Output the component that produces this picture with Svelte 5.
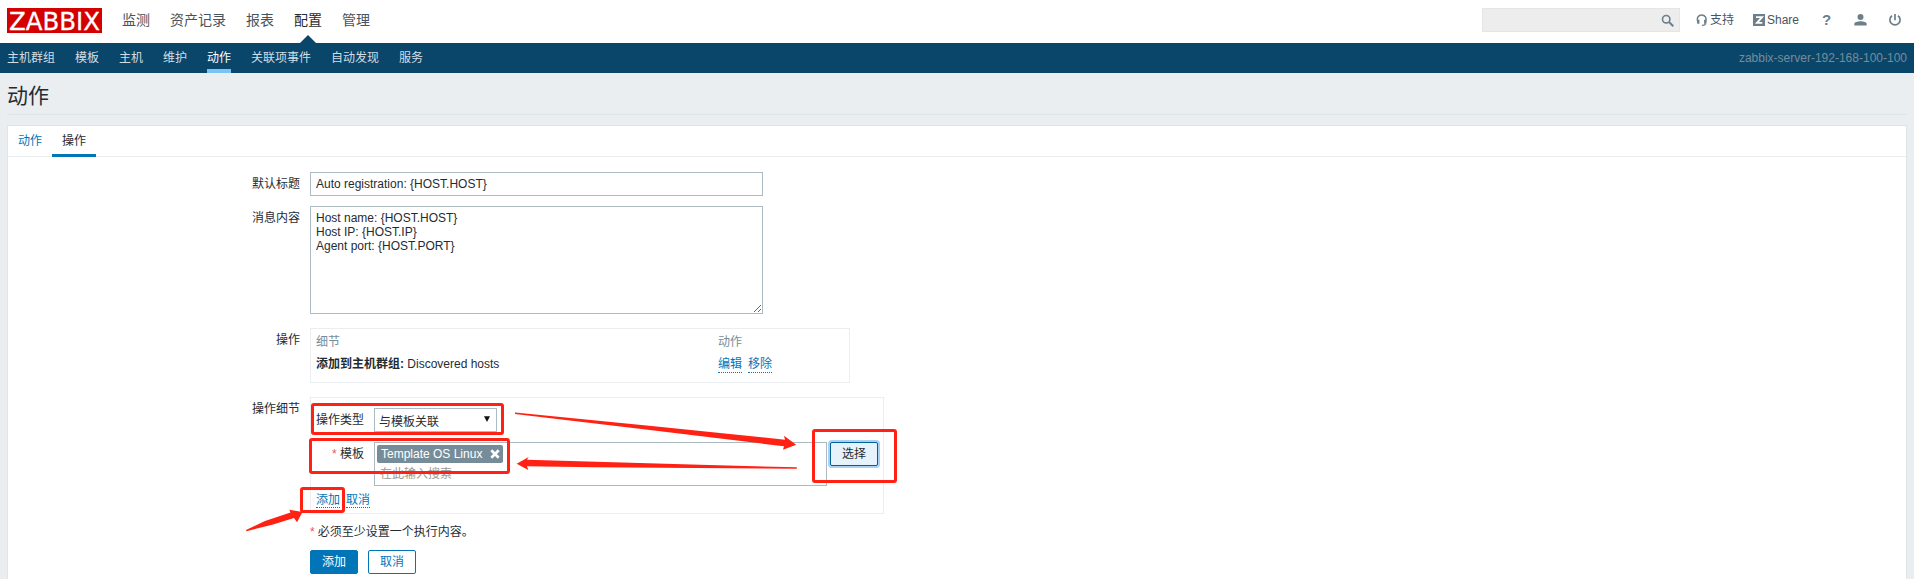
<script>
  const mainMenu = ['监测', '资产记录', '报表', '配置', '管理'];
  const subMenu = ['主机群组', '模板', '主机', '维护', '动作', '关联项事件', '自动发现', '服务'];
  const message = 'Host name: {HOST.HOST}\nHost IP: {HOST.IP}\nAgent port: {HOST.PORT}';
</script>

<div class="page">
  <header>
    <svg class="logo" width="95" height="25" viewBox="0 0 95 25">
      <rect width="95" height="25" fill="#d40000" />
      <text x="2" y="21.5" textLength="91" lengthAdjust="spacingAndGlyphs">ZABBIX</text>
    </svg>
    <nav class="main">
      {#each mainMenu as item}
        <a class:active={item === '配置'}>{item}</a>
      {/each}
    </nav>
    <div class="search">
      <svg width="14" height="14" viewBox="0 0 14 14" fill="none" stroke="#6c7f8a">
        <circle cx="5.2" cy="5.2" r="3.7" stroke-width="1.6" />
        <path d="M8 8l4.3 4.3" stroke-width="2" />
      </svg>
    </div>
    <div class="tools">
      <a class="support">
        <svg width="12" height="13" viewBox="0 0 12 13" fill="none" stroke="#6c7f8a">
          <path d="M2 8.5C.2 3.800 2.600 1 5.700 1s5.500 2.800 3.700 7.500" stroke-width="1.5" />
          <path d="M2.300 5.800v4M9.200 5.800v4" stroke-width="2.200" />
          <path d="M9.700 9.500c-.3 1.600-1.500 2-3.700 2" stroke-width="1.300" />
        </svg>支持</a>
      <a class="share">
        <svg width="12" height="12" viewBox="0 0 12 12">
          <rect width="12" height="12" fill="#6c7f8a" />
          <path d="M3 3.100h6L4 8.900h5.300" fill="none" stroke="#fff" stroke-width="1.900" />
        </svg>Share</a>
      <a class="help">?</a>
      <svg class="user" width="13" height="12" viewBox="0 0 13 12" fill="#6c7f8a">
        <circle cx="6.500" cy="3" r="3" />
        <path d="M.3 11.500V10C.3 8.200 3.500 7.300 6.500 7.300s6.200.9 6.200 2.700v1.500z" />
      </svg>
      <svg class="power" width="14" height="14" viewBox="0 0 14 14" fill="none" stroke="#6c7f8a" stroke-width="1.700">
        <path d="M7 1v6.300M4 2.700a5.100 5.100 0 1 0 6 0" />
      </svg>
    </div>
  </header>

  <nav class="sub">
    {#each subMenu as item}
      <a class:active={item === '动作'}>{item}</a>
    {/each}
    <span class="server">zabbix-server-192-168-100-100</span>
  </nav>

  <h1>动作</h1>

  <main>
    <div class="tabs">
      <a>动作</a>
      <a class="active">操作</a>
    </div>

    <div class="row subject">
      <span class="label">默认标题</span>
      <input type="text" value="Auto registration: {'{HOST.HOST}'}" />
    </div>
    <div class="row message">
      <span class="label">消息内容</span>
      <textarea value={message}></textarea>
    </div>
    <div class="row operations">
      <span class="label">操作</span>
      <div class="box">
        <div class="cells head"><span>细节</span><span>动作</span></div>
        <div class="cells">
          <span><b>添加到主机群组:</b> Discovered hosts</span>
          <span class="links"><a>编辑</a><a>移除</a></span>
        </div>
      </div>
    </div>
    <div class="row details">
      <span class="label">操作细节</span>
      <div class="box">
        <div class="field">
          <span class="name">操作类型</span>
          <div class="select">与模板关联
            <svg width="6" height="6" viewBox="0 0 6 6"><path d="M0 .2h6L3 6z" fill="#111" /></svg>
          </div>
        </div>
        <div class="field template">
          <span class="name"><i>*</i> 模板</span>
          <div class="multi">
            <span class="chip">Template OS Linux
              <svg width="10" height="10" viewBox="0 0 10 10"><path d="M1.300 1.300l7.400 7.400M8.700 1.300L1.300 8.700" stroke="#fff" stroke-width="2.700" /></svg>
            </span>
            <span class="placeholder">在此输入搜索</span>
          </div>
          <button class="pick">选择</button>
        </div>
        <div class="links"><a>添加</a><a>取消</a></div>
      </div>
    </div>
    <div class="note"><i>*</i>必须至少设置一个执行内容。</div>
    <div class="actions">
      <button class="primary">添加</button>
      <button>取消</button>
    </div>
  </main>

  <svg class="marks" width="1914" height="579" viewBox="0 0 1914 579">
    <g fill="none" stroke="#ff2113" stroke-width="3">
      <rect x="312.500" y="404.500" width="190" height="29" rx="1.500" />
      <rect x="310.500" y="439.500" width="198" height="33" rx="1.500" />
      <rect x="301.500" y="488.500" width="42" height="23" rx="1.500" />
      <rect x="813.500" y="430.500" width="82" height="51" rx="1.500" />
    </g>
    <g fill="#ff2113">
      <path d="M515 412.500L654 426.300 785 439.700 784 435.700 796.200 444.700 783 449.700 784 446.300 654 430.500 515 414z" />
      <path d="M516.700 463.700L528.700 457 527 459.700 700 464.800 796.800 467.300V468.800L594 467.300 527 466.300 528.300 470z" />
      <path d="M246 530L265 521 290.500 512.500 289.300 509.800 302.500 512 297 522.300 294 518 273 524.500 246.500 531.200z" />
    </g>
  </svg>
</div>

<style>
  :global(body) {
    margin: 0;
    background: #ebeef0;
    overflow: hidden;
  }
  .page {
    position: relative;
    height: 579px;
    overflow: hidden;
    display: flex;
    flex-direction: column;
    font: 12px/18px "Liberation Sans", "Noto Sans CJK SC", sans-serif;
    color: #1f2c33;
  }
  .page * { box-sizing: border-box; }
  header {
    height: 43px;
    flex: none;
    display: flex;
    align-items: flex-start;
    background: #fff;
    padding: 8px 12px 0 7px;
  }
  .logo { overflow: visible; }
  .logo text {
    font: 25px "DejaVu Sans", sans-serif;
    fill: #fff;
    stroke: #fff;
    stroke-width: 0.3px;
  }
  .main {
    display: flex;
    gap: 20px;
    margin-left: 20px;
    font-size: 14px;
    line-height: 24px;
    color: #48545b;
    height: 35px;
  }
  .main a { position: relative; }
  .main .active { color: #1f2c33; }
  .main .active::after {
    content: "";
    position: absolute;
    left: 6px;
    bottom: 0;
    border: 8px solid transparent;
    border-top: 0;
    border-bottom-color: #0a466a;
  }
  .search {
    margin-left: auto;
    width: 198px;
    height: 24px;
    background: #ededed;
    border: 1px solid #e3e6e8;
    display: flex;
    justify-content: flex-end;
    padding: 5px 4px;
  }
  .tools {
    display: flex;
    align-items: center;
    height: 24px;
    width: 222px;
    padding-left: 16px;
    color: #48545b;
  }
  .tools a { display: flex; align-items: center; }
  .support svg { margin-right: 2px; }
  .share { margin-left: 19px; }
  .share svg { margin-right: 2px; }
  .help {
    margin-left: 23px;
    width: 9px;
    font-size: 15px;
    font-weight: bold;
    color: #6c7f8a;
  }
  .user { margin-left: 23px; }
  .power { margin-left: 21px; flex: none; }
  .sub {
    height: 30px;
    flex: none;
    display: flex;
    gap: 20px;
    padding: 0 7px;
    background: #0a466a;
    color: #d3dee4;
    line-height: 30px;
  }
  .sub .active {
    color: #fff;
    border-bottom: 4px solid #7ac4f5;
  }
  .server { margin-left: auto; color: #768d99; }
  h1 {
    margin: 0 7px;
    height: 42px;
    flex: none;
    border-bottom: 1px solid #dfe4e7;
    font-size: 21px;
    font-weight: normal;
    line-height: 45px;
  }
  main {
    margin: 10px 7px 0;
    height: 470px;
    flex: none;
    background: #fff;
    border: 1px solid #dfe4e7;
  }
  .tabs {
    height: 31px;
    border-bottom: 1px solid #ebeef0;
    display: flex;
    line-height: 30px;
    color: #0275b8;
  }
  .tabs a { padding: 0 10px; height: 31px; }
  .tabs .active {
    color: #1f2c33;
    border-bottom: 3px solid #0275b8;
  }
  .row { display: flex; gap: 10px; }
  .label {
    width: 292px;
    line-height: 24px;
    text-align: right;
  }
  input, textarea {
    width: 453px;
    height: 24px;
    margin: 0;
    padding: 0 5px;
    border: 1px solid #acbbc2;
    font: inherit;
    color: inherit;
    background: #fff;
    outline: none;
  }
  .subject { margin-top: 15px; }
  .message { margin-top: 10px; }
  textarea {
    height: 108px;
    padding: 4px 5px;
    line-height: 14px;
    overflow: hidden;
    resize: both;
  }
  .box { border: 1px solid #ebeef0; }
  .operations { margin-top: 14px; }
  .operations .box {
    width: 540px;
    height: 55px;
    padding: 3px 5px;
  }
  .cells {
    display: grid;
    grid-template-columns: 402px auto;
    height: 23px;
    line-height: 19px;
  }
  .head { color: #768d99; line-height: 21px; }
  .cells > span { height: 19px; }
  .links { display: flex; gap: 6px; color: #0275b8; }
  .links a {
    height: 16px;
    line-height: 17px;
    border-bottom: 1px dotted #0275b8;
  }
  .cells .links a { height: 18px; line-height: 19px; }
  .details { margin-top: 14px; }
  .details .box {
    width: 574px;
    height: 117px;
    padding: 10px 5px 0;
  }
  .field { display: flex; align-items: flex-start; }
  .name {
    width: 48px;
    margin-right: 10px;
    text-align: right;
    line-height: 24px;
  }
  i { font-style: normal; color: #e45959; }
  .select {
    width: 123px;
    height: 24px;
    border: 1px solid #acbbc2;
    display: flex;
    align-items: center;
    justify-content: space-between;
    padding: 4px 6px 0 4px;
  }
  .select svg { margin-bottom: 6px; }
  .template { margin-top: 10px; }
  .multi {
    width: 453px;
    height: 44px;
    border: 1px solid #acbbc2;
    padding: 2px;
    display: flex;
    flex-direction: column;
    align-items: flex-start;
  }
  .chip {
    width: 126px;
    height: 18px;
    display: flex;
    align-items: center;
    justify-content: space-between;
    padding: 0 3px 0 4px;
    border-radius: 2px;
    background: #768d99;
    color: #fff;
    white-space: nowrap;
  }
  .placeholder {
    padding: 1px 3px;
    height: 20px;
    line-height: 20px;
    color: #999;
  }
  button {
    width: 48px;
    height: 24px;
    padding: 0;
    border: 1px solid #0275b8;
    border-radius: 2px;
    background: #fff;
    color: #0275b8;
    font: inherit;
    line-height: 22px;
  }
  .pick {
    margin-left: 3px;
    background: #e6f3fd;
    border-color: #035f96;
    color: #1f2c33;
    box-shadow: 0 0 0 2px #a9d1f4;
  }
  .details .links { margin-top: 6px; }
  .note {
    display: flex;
    gap: 3px;
    margin: 9px 0 0 302px;
  }
  .actions {
    display: flex;
    gap: 10px;
    margin: 9px 0 0 302px;
  }
  .primary { background: #0275b8; color: #fff; }
  .marks {
    position: absolute;
    left: 0;
    top: 0;
    pointer-events: none;
  }
</style>
